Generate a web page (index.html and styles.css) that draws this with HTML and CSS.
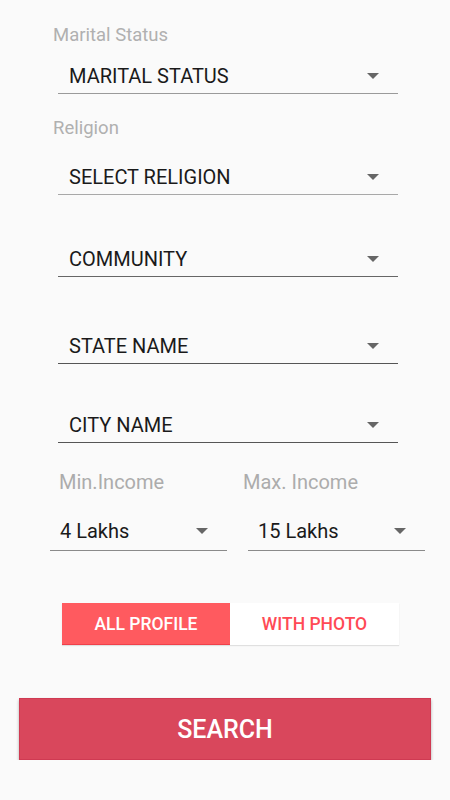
FILE: index.html
```html
<!DOCTYPE html>
<html lang="en">
<head>
  <meta charset="UTF-8">
  <title>Search</title>
  <link rel="stylesheet" href="styles.css">
</head>
<body>
  <div class="form">
    <div class="field-label label-marital">Marital Status</div>
    <div class="select sel-marital">
      <span>MARITAL STATUS</span><span class="arrow"></span>
    </div>

    <div class="field-label label-religion">Religion</div>
    <div class="select sel-religion">
      <span>SELECT RELIGION</span><span class="arrow"></span>
    </div>

    <div class="select sel-community">
      <span>COMMUNITY</span><span class="arrow"></span>
    </div>

    <div class="select sel-state">
      <span>STATE NAME</span><span class="arrow"></span>
    </div>

    <div class="select sel-city">
      <span>CITY NAME</span><span class="arrow"></span>
    </div>

    <div class="income-row">
      <div class="income-col">
        <div class="income-label">Min.Income</div>
        <div class="select income-select">
          <span>4 Lakhs</span><span class="arrow"></span>
        </div>
      </div>
      <div class="income-col">
        <div class="income-label max">Max. Income</div>
        <div class="select income-select">
          <span>15 Lakhs</span><span class="arrow"></span>
        </div>
      </div>
    </div>

    <div class="toggle">
      <button class="toggle-btn active">ALL PROFILE</button>
      <button class="toggle-btn">WITH PHOTO</button>
    </div>

    <button class="search-btn">SEARCH</button>
  </div>
</body>
</html>
```

FILE: styles.css
```css
body {
  margin: 0;
  background-color: #fafafa;
  font-family: Roboto, 'Liberation Sans', sans-serif;
  color: #1a1a1a;
}
.form {
  display: flex;
  flex-direction: column;
  padding-top: 25px;
}
.field-label {
  font-size: 18.5px;
  line-height: 20px;
  color: #b0b0b0;
  margin-left: 53px;
}
.select {
  display: flex;
  align-items: center;
  justify-content: space-between;
  font-size: 20px;
  line-height: 24px;
  padding: 0 19px 5px 11px;
  margin-left: 58px;
  width: 340px;
  box-sizing: border-box;
  border-bottom: 1px solid #8a8a8a;
}
.arrow {
  width: 0;
  height: 0;
  border-left: 6px solid transparent;
  border-right: 6px solid transparent;
  border-top: 6px solid #666;
}
.sel-marital { margin-top: 19px; border-bottom-color: #9a9a9a; }
.label-religion { margin-top: 24px; }
.sel-religion { margin-top: 27px; border-bottom-color: #a8a8a8; }
.sel-community { margin-top: 52px; border-bottom-color: #666; }
.sel-state { margin-top: 57px; border-bottom-color: #555; }
.sel-city { margin-top: 49px; border-bottom-color: #555; }

.income-row {
  display: grid;
  grid-template-columns: 177px 177px;
  column-gap: 21px;
  margin-left: 50px;
  margin-top: 27px;
}
.income-label {
  font-size: 20px;
  line-height: 24px;
  color: #acacac;
  padding-left: 9px;
}
.income-label.max {
  padding-left: 0;
  margin-left: -5px;
}
.income-select {
  margin: 25px 0 0 0;
  width: 177px;
  padding: 0 19px 7px 10px;
  border-bottom-color: #8a8a8a;
}

.toggle {
  display: flex;
  margin: 52px 0 0 62px;
  width: 337px;
  height: 42px;
  box-shadow: 0 1px 1px rgba(0, 0, 0, 0.1);
}
.toggle-btn {
  flex: 1;
  border: none;
  background: #fff;
  color: #ff4a55;
  font-family: inherit;
  font-size: 17.5px;
  font-weight: 500;
  padding: 0;
}
.toggle-btn.active {
  flex: 0 0 168px;
  background: #ff5a5f;
  color: #fff;
  border-bottom: 1px solid #f0404a;
}

.search-btn {
  margin: 53px 19px 0 19px;
  height: 62px;
  background-color: #d9475c;
  color: #fff;
  border: 1px solid #cf3a52;
  font-family: inherit;
  font-size: 25px;
  font-weight: 500;
  box-shadow: 0 2px 3px rgba(0, 0, 0, 0.3);
}
```
